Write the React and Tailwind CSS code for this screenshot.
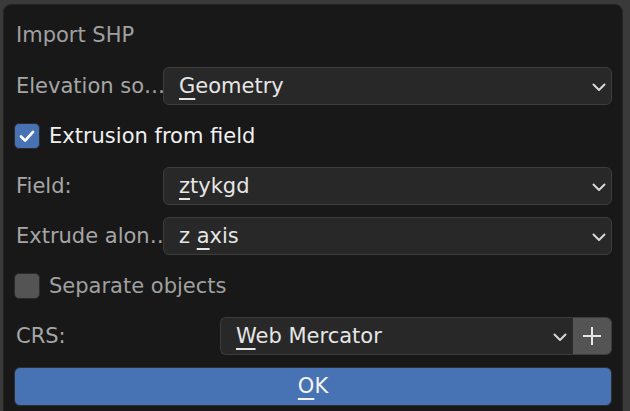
import React from "react";

const Chevron = ({ className = "" }) => (
  <svg
    className={className}
    width="14"
    height="9"
    viewBox="0 0 14 9"
    fill="none"
    stroke="#d8d8d8"
    strokeWidth="2"
    strokeLinecap="round"
    strokeLinejoin="round"
  >
    <path d="M1.5 1.5l5.5 5.5 5.5-5.5" />
  </svg>
);

const U = ({ children }) => (
  <span className="underline decoration-[1.5px] underline-offset-[5px]">{children}</span>
);

const Dropdown = ({ children }) => (
  <div className="flex-1 h-[38px] flex items-center justify-between rounded-md border border-[#3d3d3d] bg-[#282828] pl-[15px] pr-[5px] text-[#e6e6e6]">
    <span className="whitespace-nowrap">{children}</span>
    <Chevron className="mt-[3px]" />
  </div>
);

const Row = ({ label, children }) => (
  <div className="flex items-center h-[38px]">
    <div className="w-[149px] shrink-0 pl-[2px] text-[#a6a6a6] whitespace-nowrap">
      {label}
    </div>
    {children}
  </div>
);

const Checkbox = ({ checked, label }) => (
  <div className="flex items-center h-[38px] gap-[9px]">
    <div
      className={`w-[26px] h-[26px] rounded-[5px] border border-[#2a2a2a] flex items-center justify-center ${
        checked ? "bg-[#4772b3]" : "bg-[#545454]"
      }`}
    >
      {checked && (
        <svg width="26" height="26" viewBox="0 0 26 26" fill="none">
          <path
            d="M6.5 13.5l4.5 4.5 8.5-9.5"
            stroke="#ffffff"
            strokeWidth="3"
            strokeLinecap="round"
            strokeLinejoin="round"
          />
        </svg>
      )}
    </div>
    <span className={checked ? "text-[#f0f0f0]" : "text-[#a0a0a0]"}>{label}</span>
  </div>
);

export default function App() {
  return (
    <div
      className="w-[630px] h-[411px] overflow-hidden bg-[#3a3a3a] pl-[3px] pt-[4px]"
      style={{ fontFamily: '"DejaVu Sans", sans-serif' }}
    >
      <div className="w-[620px] h-[420px] rounded-lg bg-[#181818] border border-[#242424] px-[10px] pt-[11px] text-[21px] leading-none">
        <div className="h-[38px] flex items-center pl-[2px] mb-[13px] text-[#a0a0a0]">Import SHP</div>
        <div className="flex flex-col gap-3">
          <Row label="Elevation so…">
            <Dropdown>
              <U>G</U>eometry
            </Dropdown>
          </Row>
          <Checkbox checked label="Extrusion from field" />
          <Row label="Field:">
            <Dropdown>
              <U>z</U>tykgd
            </Dropdown>
          </Row>
          <Row label="Extrude alon…">
            <Dropdown>
              z <U>a</U>xis
            </Dropdown>
          </Row>
          <Checkbox label="Separate objects" />
          <div className="flex items-center h-[38px]">
            <div className="w-[206px] shrink-0 pl-[2px] text-[#a6a6a6]">CRS:</div>
            <div className="flex-1 h-[38px] flex items-center justify-between rounded-l-md border border-r-0 border-[#3d3d3d] bg-[#282828] pl-[15px] pr-[5px] text-[#e6e6e6]">
              <span className="whitespace-nowrap">
                <U>W</U>eb Mercator
              </span>
              <Chevron className="mt-[3px]" />
            </div>
            <div className="w-[40px] h-[38px] flex items-center justify-center rounded-r-md border border-[#3d3d3d] border-l-[#2a2a2a] bg-[#545454]">
              <svg width="20" height="20" viewBox="0 0 20 20" stroke="#e6e6e6" strokeWidth="2">
                <path d="M10 1v18M1 10h18" />
              </svg>
            </div>
          </div>
          <div className="h-[39px] flex items-center justify-center rounded-md border border-[#2e2e2e] bg-[#4772b3] text-[#f4f4f4]">
            <U>O</U>K
          </div>
        </div>
      </div>
    </div>
  );
}
